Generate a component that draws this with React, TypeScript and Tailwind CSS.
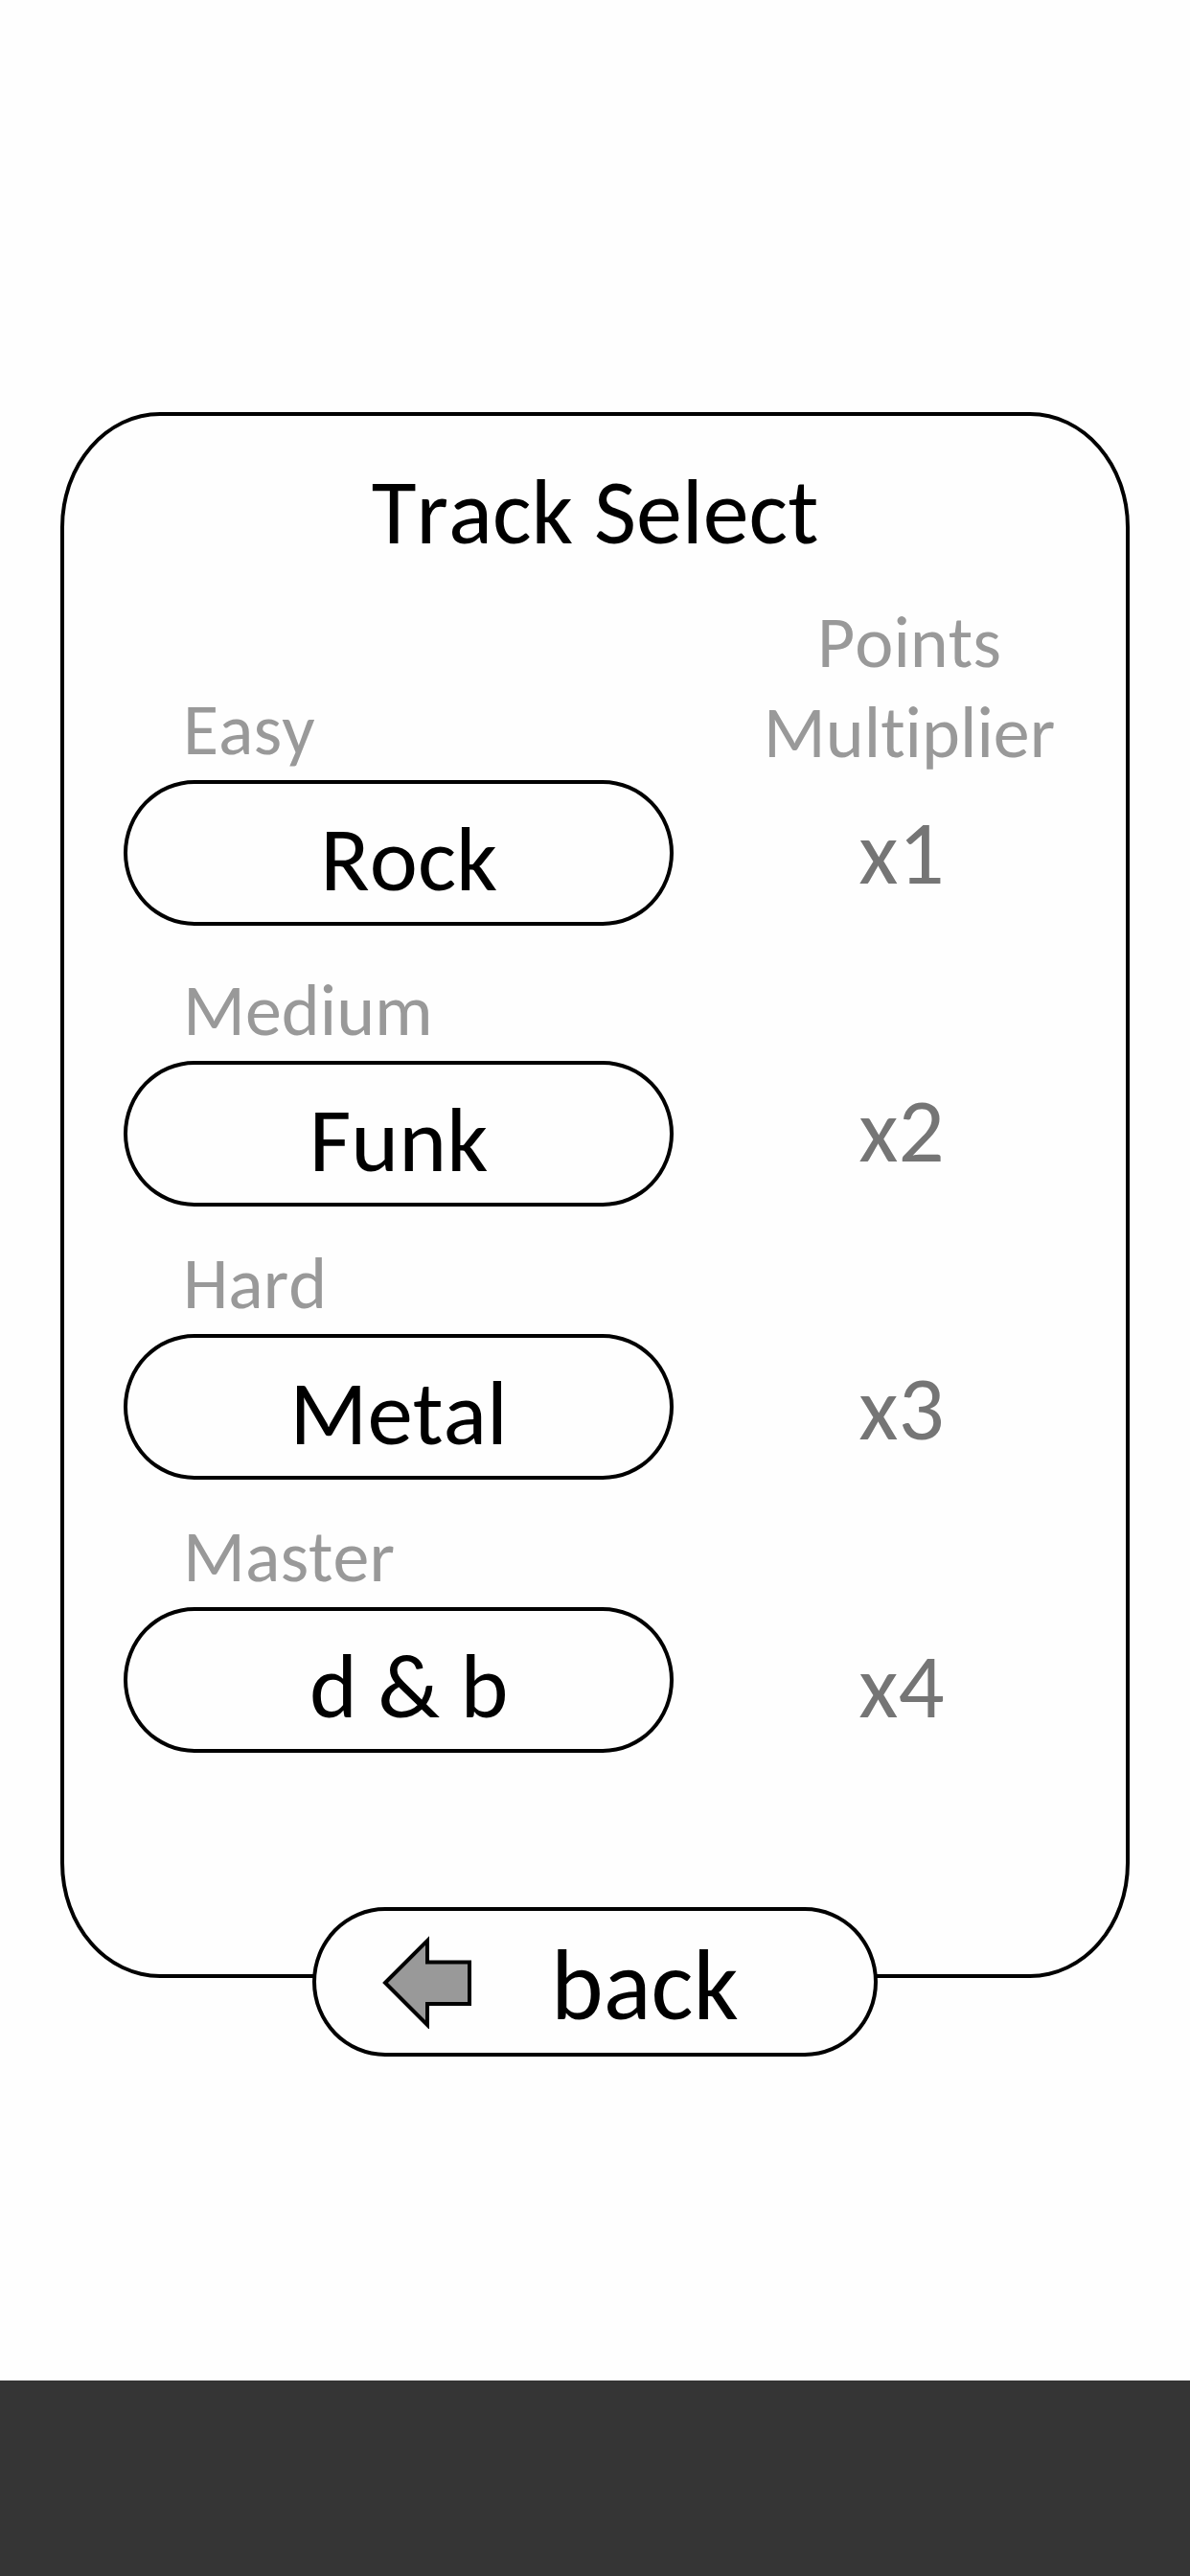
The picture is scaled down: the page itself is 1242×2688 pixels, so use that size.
const tracks = [
  { level: "Easy", name: " Rock", points: "x1" },
  { level: "Medium", name: "Funk", points: "x2" },
  { level: "Hard", name: "Metal", points: "x3" },
  { level: "Master", name: " d & b", points: "x4" },
]

function BackArrow() {
  return (
    <svg className="w-[94px] h-[98px]" viewBox="0 0 94 98" fill="none" aria-hidden="true">
      <path d="M3 50L47 6V28.5H91V72H47V94Z" fill="#999999" stroke="black" strokeWidth="4" />
    </svg>
  )
}

export default function App() {
  return (
    <div className="min-h-screen flex flex-col bg-[#fefefe] text-black font-[Carlito,Lato,sans-serif] [font-kerning:none] [font-variant-ligatures:none]">
      <main className="flex-1 flex flex-col px-[63px] pt-[430px]">

        {/* Card */}
        <section className="border-4 border-black rounded-[104px/120px] pt-[52px] pb-[231px]">
          <h1 className="text-center text-[96px] leading-[98px]">Track Select</h1>

          <div className="grid grid-cols-[574fr_472fr] pl-[62px] pt-[39px]">
            {/* Left — tracks */}
            <ul className="flex flex-col gap-[39px] pt-[97px]">
              {tracks.map((track) => (
                <li key={track.level} className="flex flex-col gap-3 first:mb-2">
                  <span className="pl-[62px] text-[76px] leading-[82px] text-[#999999]">{track.level}</span>
                  <button className="h-[152px] pt-3.5 border-4 border-black rounded-[74px/76px] text-[95px] leading-[98px] whitespace-pre">
                    {track.name}
                  </button>
                </li>
              ))}
            </ul>

            {/* Right — multipliers */}
            <div className="text-center">
              <h2 className="pl-5 text-[76px] leading-[94px] text-[#999999]">
                Points
                <br />
                Multiplier
              </h2>
              <ul className="flex flex-col gap-48 pt-[30px] pl-1 text-[95px] leading-[98px] text-[#757575]">
                {tracks.map((track) => (
                  <li key={track.points}>{track.points}</li>
                ))}
              </ul>
            </div>
          </div>
        </section>

        {/* Back sits over the bottom edge of the card */}
        <button className="relative self-center -mt-[74px] w-[590px] h-[156px] flex items-center gap-[82px] pl-[69px] bg-[#fefefe] border-4 border-black rounded-[76px/78px]">
          <BackArrow />
          <span className="pt-2 text-[104px] leading-[110px]">back</span>
        </button>
      </main>

      <footer className="h-[204px] bg-[#353535]" />
    </div>
  )
}
